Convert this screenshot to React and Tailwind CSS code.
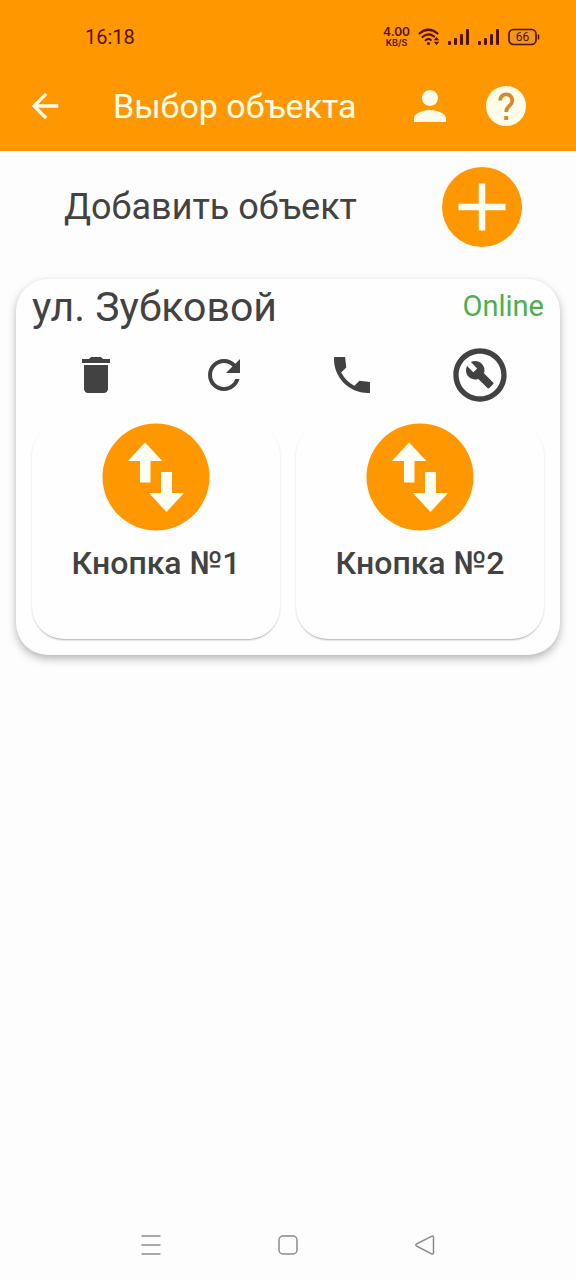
import React from "react";

function Icon({ d, className = "size-12" }) {
  return (
    <svg viewBox="0 0 24 24" fill="currentColor" aria-hidden="true" className={className}>
      <path d={d} />
    </svg>
  );
}

const BACK = "M20 11H7.83l5.59-5.59L12 4l-8 8 8 8 1.41-1.41L7.83 13H20v-2z";
const PERSON =
  "M12 12c2.21 0 4-1.79 4-4s-1.79-4-4-4-4 1.79-4 4 1.79 4 4 4zm0 2c-2.67 0-8 1.34-8 4v2h16v-2c0-2.66-5.33-4-8-4z";
const TRASH = "M6 19c0 1.1.9 2 2 2h8c1.1 0 2-.9 2-2V7H6v12zM19 4h-3.5l-1-1h-5l-1 1H5v2h14V4z";
const REFRESH =
  "M17.65 6.35C16.2 4.9 14.21 4 12 4c-4.42 0-7.99 3.58-7.99 8s3.57 8 7.99 8c3.73 0 6.84-2.55 7.73-6h-2.08c-.82 2.33-3.04 4-5.65 4-3.31 0-6-2.69-6-6s2.69-6 6-6c1.66 0 3.14.69 4.22 1.78L13 11h7V4l-2.35 2.35z";
const PHONE =
  "M20.99 15.46l-5.27-.61-2.52 2.52c-2.83-1.44-5.15-3.75-6.59-6.59l2.53-2.53L8.54 3H3.03C2.45 13.18 10.82 21.55 21 20.97v-5.51z";
const SETTINGS =
  "M12 2C6.48 2 2 6.48 2 12s4.48 10 10 10 10-4.48 10-10S17.52 2 12 2zm0 18c-4.41 0-8-3.59-8-8s3.59-8 8-8 8 3.59 8 8-3.59 8-8 8zM13.49 11.38c.43-1.22.17-2.64-.81-3.62-1.11-1.11-2.79-1.3-4.1-.59l2.35 2.35-1.41 1.41-2.35-2.35c-.71 1.32-.52 2.99.59 4.1.98.98 2.4 1.24 3.62.81l3.41 3.41c.2.2.51.2.71 0l1.4-1.4c.2-.2.2-.51 0-.71l-3.41-3.41z";

function Signal() {
  return (
    <svg viewBox="0 0 22 18" fill="currentColor" aria-hidden="true" className="h-[18px] w-[22px]">
      <rect x="0" y="13" width="3" height="4" rx="1" />
      <rect x="6" y="10" width="3" height="7" rx="1" />
      <rect x="12" y="6" width="3" height="11" rx="1" />
      <rect x="18" y="1" width="3" height="16" rx="1" />
    </svg>
  );
}

function StatusBar() {
  return (
    <div className="flex h-[74px] items-center justify-between pr-9 pl-[85px] text-[#551008]">
      <span className="text-xl">16:18</span>
      <div className="flex items-center gap-2">
        <div className="text-center font-['Inter',sans-serif] font-semibold">
          <div className="text-[12px] leading-[12px]">4.00</div>
          <div className="text-[9px] leading-[10px]">KB/S</div>
        </div>
        <svg viewBox="0 0 22 18" fill="none" stroke="currentColor" strokeLinecap="round" aria-hidden="true" className="h-[18px] w-[22px]">
          <path d="M1.500 5.500Q10.500 -2 19.500 5.500M4.500 9Q10.500 4 16 8.500" strokeWidth="2.200" />
          <path d="M7.500 12.200Q10.500 10 13 12" strokeWidth="2" />
          <circle cx="10.500" cy="15.500" r="1.600" fill="currentColor" stroke="none" />
          <path d="m18.500 9 2.800 3.200h-5.600zM18.500 17l2.800-3.200h-5.600z" fill="currentColor" stroke="none" />
        </svg>
        <Signal />
        <Signal />
        <svg viewBox="0 0 32 18" fill="none" stroke="currentColor" aria-label="66%" className="h-[18px] w-8">
          <rect x="1" y="1.500" width="27" height="15" rx="4.500" fill="#f0961c" strokeWidth="1.700" />
          <path d="M30.500 6.500v5" strokeWidth="1.500" />
          <text x="14.500" y="13" textAnchor="middle" fontSize="12" fill="currentColor" stroke="none">66</text>
        </svg>
      </div>
    </div>
  );
}

function AppBar() {
  return (
    <div className="flex h-[77px] items-start pr-[46px] pl-[25px] text-[#fffde9]">
      <button type="button" aria-label="Назад" className="flex h-16 items-center">
        <Icon d={BACK} className="size-10" />
      </button>
      <h1 className="ml-12 flex h-16 flex-1 items-center text-[34px] whitespace-nowrap">Выбор объекта</h1>
      <div className="flex h-16 items-center gap-7">
        <button type="button" aria-label="Профиль">
          <Icon d={PERSON} />
        </button>
        <button type="button" aria-label="Помощь">
          <svg viewBox="0 0 48 48" aria-hidden="true" className="size-12">
            <circle cx="24" cy="24" r="20" fill="currentColor" />
            <path d="M18 18.500a6.200 6.200 0 0 1 12.400 0c0 5-6.200 5.500-6.200 11.500" fill="none" stroke="#d38a2c" strokeWidth="3.800" />
            <path d="M22.200 34h4v4h-4z" fill="#d38a2c" />
          </svg>
        </button>
      </div>
    </div>
  );
}

function RelayButton({ name }) {
  return (
    <button
      type="button"
      className="flex h-[216px] flex-1 flex-col items-center rounded-[32px] text-[32px] leading-10 font-medium shadow-[0_2px_2px_-1px_rgba(0,0,0,0.22),0_1px_2px_rgba(0,0,0,0.12)]"
    >
      <svg viewBox="0 0 108 108" aria-hidden="true" className="size-[108px]">
        <circle cx="54" cy="54" r="53.500" fill="#ff9800" />
        <path d="M43 19.500 60.500 38H48.500V59.500H38V38H26zM59 49H70V70H82L64.500 89 47 70H59z" fill="#fffff4" />
      </svg>
      <span className="mt-3">{name}</span>
    </button>
  );
}

function ObjectCard() {
  const actions = [
    { label: "Удалить", d: TRASH },
    { label: "Обновить", d: REFRESH },
    { label: "Позвонить", d: PHONE },
    { label: "Настройки", d: SETTINGS, className: "size-16" },
  ];
  return (
    <section className="mx-4 rounded-[32px] bg-[#fefefe] px-4 pb-4 shadow-[0_4px_8px_rgba(0,0,0,0.28),0_0_2px_rgba(0,0,0,0.06)]">
      <div className="flex h-14 items-center justify-between">
        <h2 className="text-[41px] leading-[56px]">ул. Зубковой</h2>
        <span className="text-[29px] text-[#4caf50]">Online</span>
      </div>
      <div className="mb-2 grid h-20 grid-cols-4 items-center">
        {actions.map((a) => (
          <button key={a.label} type="button" aria-label={a.label} className="flex h-16 items-center justify-center">
            <Icon d={a.d} className={a.className} />
          </button>
        ))}
      </div>
      <div className="flex gap-4">
        <RelayButton name="Кнопка №1" />
        <RelayButton name="Кнопка №2" />
      </div>
    </section>
  );
}

function NavBar() {
  return (
    <nav className="mt-auto flex h-[70px] items-center justify-center gap-[105px] text-[#8c8c8c]">
      <button type="button" aria-label="Недавние">
        <svg viewBox="0 0 32 32" fill="none" stroke="currentColor" strokeWidth="1.500" className="size-8">
          <path d="M6.500 7h19M6.500 16h19M6.500 25h19" />
        </svg>
      </button>
      <button type="button" aria-label="Домой">
        <svg viewBox="0 0 32 32" fill="none" stroke="currentColor" strokeWidth="1.500" className="size-8">
          <rect x="7" y="7" width="18" height="18" rx="4" />
        </svg>
      </button>
      <button type="button" aria-label="Назад в систему">
        <svg viewBox="0 0 32 32" fill="none" stroke="currentColor" strokeWidth="1.500" strokeLinejoin="round" className="size-8">
          <path d="M7.500 15Q6 16 7.500 17L22.500 24.800Q24.500 25.500 24.500 23.500V8.500Q24.500 6.500 22.500 7.400Z" />
        </svg>
      </button>
    </nav>
  );
}

export default function App() {
  return (
    <div className="flex min-h-screen flex-col bg-[#fdfdfd] font-['Roboto',sans-serif] text-[#424242]">
      <header className="bg-[#ff9800]">
        <StatusBar />
        <AppBar />
      </header>
      <main>
        <div className="flex h-32 items-start justify-between pt-4 pr-[54px] pl-16">
          <span className="flex h-20 items-center text-[36px]">Добавить объект</span>
          <button type="button" aria-label="Добавить объект">
            <svg viewBox="0 0 80 80" aria-hidden="true" className="size-20">
              <circle cx="40" cy="40" r="40" fill="#ff9800" />
              <path d="M16.500 40h47M40 16.500v47" stroke="#fffff4" strokeWidth="6.500" />
            </svg>
          </button>
        </div>
        <ObjectCard />
      </main>
      <NavBar />
    </div>
  );
}
